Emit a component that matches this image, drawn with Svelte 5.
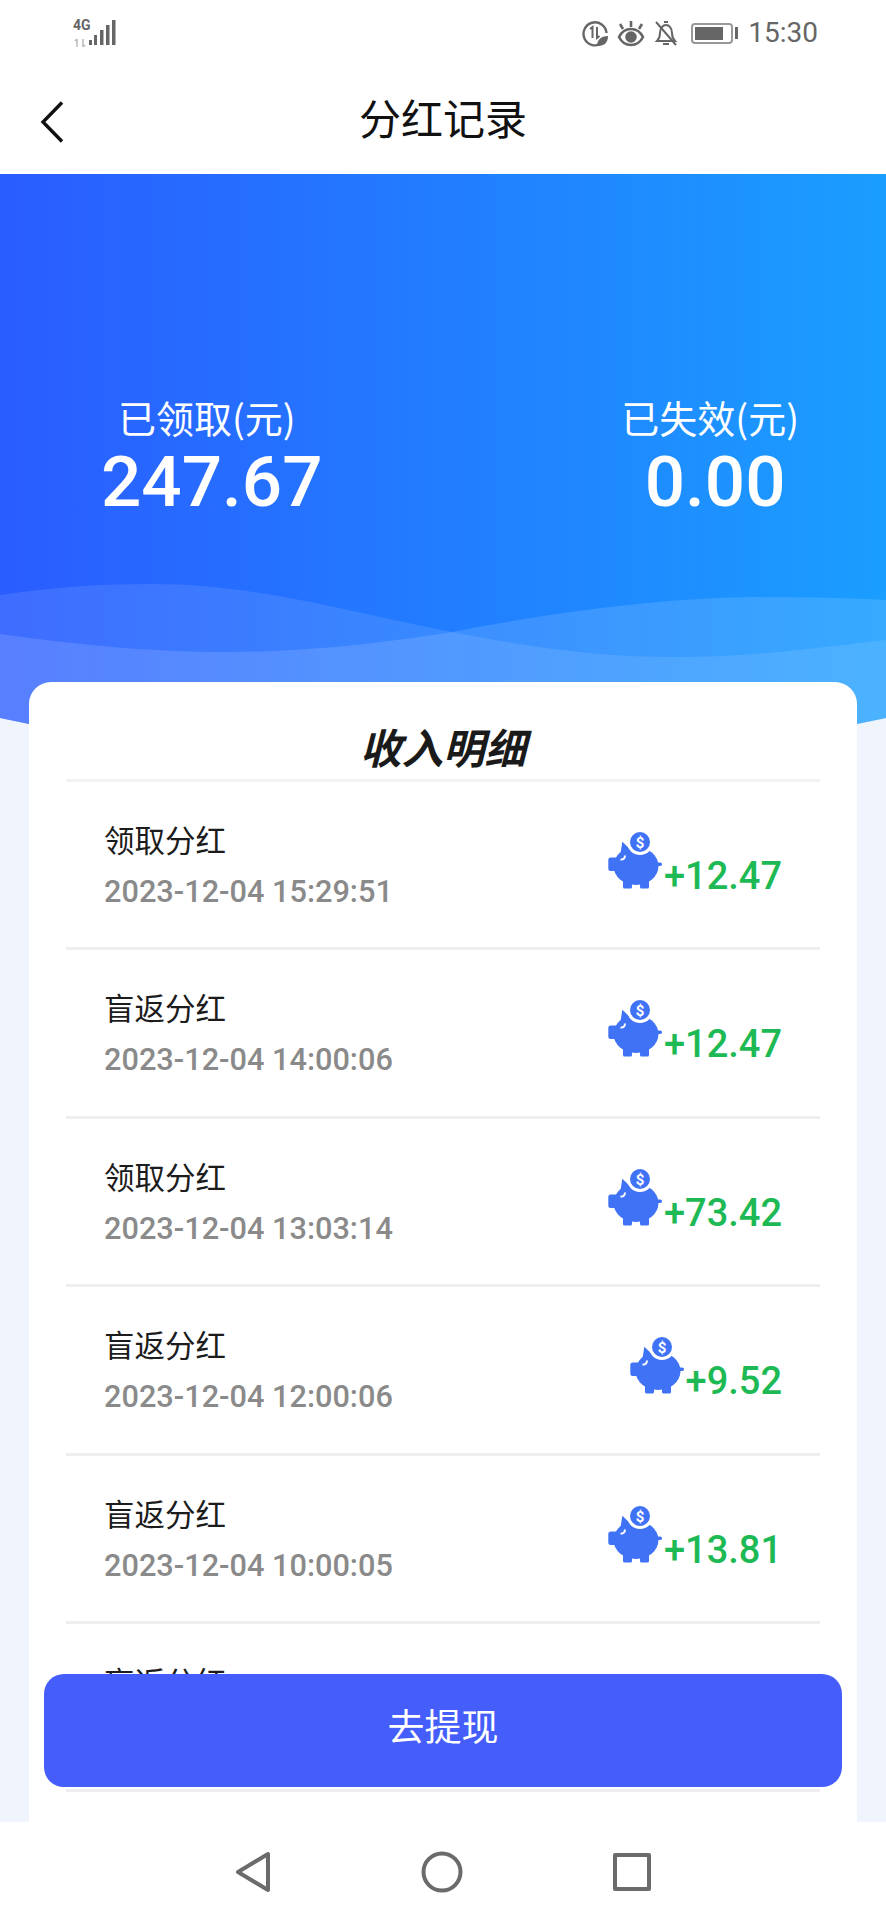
<script lang="ts">
  const rows = [
    { title: '领取分红', time: '2023-12-04 15:29:51', amount: '+12.47' },
    { title: '盲返分红', time: '2023-12-04 14:00:06', amount: '+12.47' },
    { title: '领取分红', time: '2023-12-04 13:03:14', amount: '+73.42' },
    { title: '盲返分红', time: '2023-12-04 12:00:06', amount: '+9.52' },
    { title: '盲返分红', time: '2023-12-04 10:00:05', amount: '+13.81' },
    { title: '盲返分红', time: '2023-12-04 08:00:06', amount: '+11.30' }
  ]
</script>

<div class="screen">
  <div class="status">
    <div class="signal">
      <div class="net-col">
        <span class="net">4G</span>
        <svg width="14" height="9" viewBox="0 0 14 9">
          <path d="M4 1v8M2 3l2-2M10 1v8M10 9l2-2" class="arrows" />
        </svg>
      </div>
      <svg width="27" height="26" viewBox="0 0 27 26">
        <rect x="0" y="20" width="3" height="5" fill="#666" />
        <rect x="5" y="15" width="3" height="10" fill="#666" />
        <rect x="11" y="10" width="3.500" height="15" fill="#666" />
        <rect x="17" y="5" width="3.500" height="20" fill="#666" />
        <rect x="23" y="0" width="3.500" height="25" fill="#666" />
      </svg>
    </div>
    <div class="sys">
      <svg width="28" height="28" viewBox="0 0 28 28" fill="none" stroke="#666" stroke-width="2.4">
        <path d="M21 24A11.500 11.500 0 1 1 25.500 14" />
        <path d="M9 10l2.500-2v11M16 8v11l2.500-2" stroke-width="2" />
        <path d="M16 27c0-6 4-10 11-10 0 7-4 10-11 10z" fill="#666" stroke="none" />
      </svg>
      <svg width="28" height="28" viewBox="0 0 28 28" fill="none" stroke="#666" stroke-width="2.6">
        <path d="M2 18c3-6 7-8 12-8s9 2 12 8c-3 6-7 8-12 8s-9-2-12-8z" />
        <circle cx="14" cy="18" r="4.500" fill="#666" />
        <path d="M6 10L3 5M14 8V2M22 10l3-5" />
      </svg>
      <svg class="bell" width="26" height="28" viewBox="0 0 26 28" fill="none" stroke="#666" stroke-width="2">
        <path d="M4 22c2-2 3-4 3-8 0-5 3-8 6-8s6 3 6 8c0 4 1 6 3 8z" />
        <path d="M11 3h4M10 25h6M3 3l20 23" />
      </svg>
      <div class="battery"><div class="level"></div></div>
      <div class="cap"></div>
      <span class="clock">15:30</span>
    </div>
  </div>

  <header class="nav">
    <svg class="back" width="24" height="42" viewBox="0 0 24 42" fill="none" stroke="#111" stroke-width="3.4">
      <path d="M22 1.500L3 21l19 19.500" />
    </svg>
    <h1>分红记录</h1>
  </header>

  <main class="page">
    <section class="hero">
      <svg class="waves" viewBox="0 0 886 620" preserveAspectRatio="none">
        <path d="M0 421C55 413 100 410 153 410C260 410 360 441 452 458C540 475 600 483 678 483C760 483 830 472 886 466V620H0Z" fill="#fff" fill-opacity="0.1" />
        <path d="M0 460C80 471 150 478 226 478C310 478 390 468 452 458C560 437 670 423 763 423C810 423 850 424 886 426V620H0Z" fill="#fff" fill-opacity="0.13" />
      </svg>
      <div class="stats">
        <div class="stat first">
          <span class="label">已领取(元)</span>
          <strong>247.67</strong>
        </div>
        <div class="stat second">
          <span class="label">已失效(元)</span>
          <strong>0.00</strong>
        </div>
      </div>
    </section>

    <section class="card">
      <h2>收入明细</h2>
      {#each rows as row}
        <div class="row">
          <div class="info">
            <div class="name">{row.title}</div>
            <div class="time">{row.time}</div>
          </div>
          <div class="money">
            <svg class="pig" width="55" height="60" viewBox="0 0 55 60">
              <path d="M14.300 10.700L24 20 12 26z" fill="#3f72f5" />
              <ellipse cx="28" cy="35" rx="22.500" ry="19" fill="#3f72f5" />
              <rect x="0.300" y="26.500" width="12" height="13.500" rx="2.500" fill="#3f72f5" />
              <rect x="15" y="46" width="9" height="11.500" rx="1.500" fill="#3f72f5" />
              <rect x="32" y="46" width="9" height="11.500" rx="1.500" fill="#3f72f5" />
              <rect x="48" y="31.500" width="6" height="3.500" rx="1.700" fill="#3f72f5" />
              <path d="M12.500 28.500c2.500.5 4.500-1 4.500-4" fill="none" stroke="#fff" stroke-width="2" />
              <circle cx="32" cy="11" r="13" fill="#fff" />
              <circle cx="32" cy="11" r="10" fill="#3f72f5" />
              <text x="32" y="16.500" class="dollar">$</text>
            </svg>
            <span class="amount">{row.amount}</span>
          </div>
        </div>
      {/each}
    </section>

    <button class="withdraw">去提现</button>
  </main>

  <footer class="softkeys">
    <svg width="36" height="42" viewBox="0 0 36 42" fill="none" stroke="#6b6b6b" stroke-width="4" stroke-linejoin="round">
      <path d="M33 3v36L3 21z" />
    </svg>
    <svg width="42" height="42" viewBox="0 0 42 42" fill="none" stroke="#6b6b6b" stroke-width="4">
      <circle cx="21" cy="21" r="18.500" />
    </svg>
    <svg width="38" height="38" viewBox="0 0 38 38" fill="none" stroke="#6b6b6b" stroke-width="4" stroke-linejoin="round">
      <rect x="2" y="2" width="34" height="34" />
    </svg>
  </footer>
</div>

<style>
  :global(body) {
    margin: 0;
    background: #fff;
  }

  .screen {
    width: 886px;
    height: 1920px;
    display: flex;
    flex-direction: column;
    overflow: hidden;
    font-family: "Noto Sans CJK SC", Roboto, sans-serif;
    background: #fff;
  }

  .status {
    height: 66px;
    box-sizing: border-box;
    display: flex;
    justify-content: space-between;
    align-items: flex-start;
    padding: 19px 68px 0 73px;
    color: #666;
  }

  .signal {
    display: flex;
    align-items: flex-start;
    gap: 2px;
    padding-top: 1px;
  }

  .signal svg {
    display: block;
  }

  .net-col {
    width: 14px;
    display: flex;
    flex-direction: column;
    gap: 7px;
  }

  .net {
    font: 700 14px/11px Roboto, sans-serif;
    color: #666;
    white-space: nowrap;
  }

  .arrows {
    stroke: #bbb;
    stroke-width: 1.5;
    fill: none;
  }

  .sys {
    display: flex;
    align-items: center;
    height: 28px;
  }

  .sys svg {
    margin-right: 8px;
  }

  .sys .bell {
    margin-right: 12px;
  }

  .battery {
    width: 42px;
    height: 21px;
    box-sizing: border-box;
    border: 2px solid #999;
    border-radius: 4px;
    padding: 2px;
  }

  .level {
    width: 28px;
    height: 100%;
    background: #666;
  }

  .cap {
    width: 3px;
    height: 12px;
    margin-left: 2px;
    background: #666;
  }

  .clock {
    margin-left: 10px;
    font: 400 28px/28px Roboto, sans-serif;
    color: #666;
  }

  .nav {
    height: 108px;
    display: flex;
    align-items: center;
    justify-content: center;
    position: relative;
  }

  .back {
    position: absolute;
    left: 40px;
    top: 35px;
  }

  h1 {
    margin: 0;
    font-size: 42px;
    font-weight: 400;
    color: #111;
    line-height: 1;
    position: relative;
    top: -3px;
  }

  .page {
    flex: 1;
    position: relative;
    background: #f0f4fc;
    min-height: 0;
    overflow: hidden;
  }

  .hero {
    height: 620px;
    position: relative;
    background: linear-gradient(90deg, #2a5cff 0%, #1a9eff 100%);
    clip-path: path('M0 0H886V544Q443 640 0 544Z');
  }

  .waves {
    position: absolute;
    inset: 0;
    width: 100%;
    height: 100%;
  }

  .stats {
    position: relative;
    display: flex;
    justify-content: space-between;
    padding: 221px 77px 0 101px;
    color: #fff;
  }

  .stat {
    display: flex;
    flex-direction: column;
    align-items: center;
  }

  .label {
    font-size: 38px;
    line-height: 44px;
    font-weight: 400;
  }

  .stat strong {
    font: 500 71px/76px Roboto, sans-serif;
    margin-top: 5px;
  }

  .first .label {
    margin-right: 10px;
  }

  .second .label {
    margin-right: 10px;
  }

  .card {
    position: relative;
    margin: -112px 29px 0;
    height: 1200px;
    box-sizing: border-box;
    padding: 0 37px;
    background: #fff;
    border-radius: 22px 22px 0 0;
  }

  h2 {
    margin: 0;
    height: 100px;
    box-sizing: border-box;
    padding-top: 37px;
    text-align: center;
    font-size: 41.500px;
    line-height: 54px;
    font-weight: 700;
    font-style: italic;
    color: #1a1a1a;
    border-bottom: 3px solid #f2f2f4;
  }

  .row {
    height: 168.4px;
    box-sizing: border-box;
    padding: 34px 38px 0 38px;
    display: flex;
    justify-content: space-between;
    align-items: flex-start;
    border-bottom: 3px solid #eeeeef;
  }

  .name {
    font-size: 30.500px;
    line-height: 46px;
    color: #1c1c1c;
  }

  .time {
    margin-top: 11px;
    font: 500 30.700px/38px Roboto, sans-serif;
    color: #8a8a8a;
  }

  .money {
    display: flex;
    align-items: flex-end;
    margin-top: 15px;
  }

  .pig {
    display: block;
    margin-bottom: 7px;
  }

  .dollar {
    font: 700 15px Roboto, sans-serif;
    fill: #fff;
    text-anchor: middle;
  }

  .amount {
    margin-left: 1px;
    font: 500 38px/44px Roboto, sans-serif;
    color: #1db954;
  }

  .withdraw {
    position: absolute;
    left: 44px;
    right: 44px;
    top: 1500px;
    height: 113px;
    border: 0;
    padding: 0 0 12px;
    border-radius: 20px;
    background: #445dfb;
    color: #fff;
    font-family: inherit;
    font-size: 37px;
    font-weight: 400;
  }

  .softkeys {
    height: 98px;
    flex: none;
    background: #fff;
    position: relative;
  }

  .softkeys svg {
    position: absolute;
    top: 29px;
  }

  .softkeys svg:nth-child(1) { left: 235px; }
  .softkeys svg:nth-child(2) { left: 421px; }
  .softkeys svg:nth-child(3) { left: 613px; top: 31px; }
</style>
